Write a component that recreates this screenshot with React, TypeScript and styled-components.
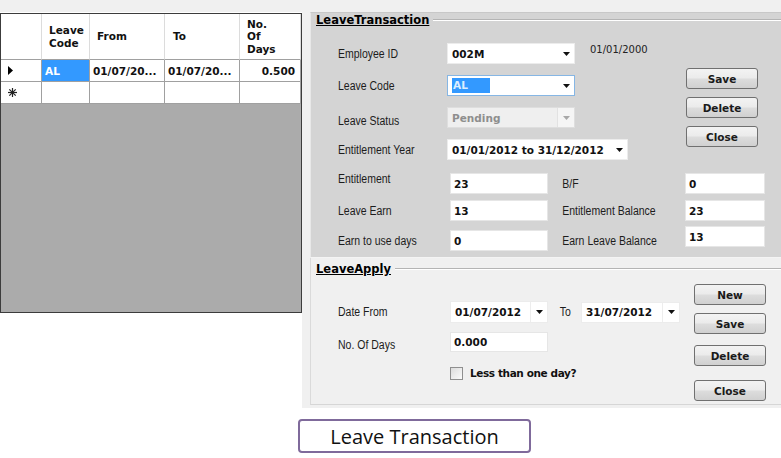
import React from "react";
import styled, { createGlobalStyle } from "styled-components";

const LABEL_FONT = `"Liberation Sans", Arial, sans-serif`;
const VALUE_FONT = `"DejaVu Sans", Verdana, sans-serif`;

const GlobalStyle = createGlobalStyle`
  html, body {
    margin: 0;
    padding: 0;
    background: #ffffff;
  }
  body {
    font-family: "Liberation Sans", Arial, sans-serif;
  }
  * {
    box-sizing: border-box;
  }
`

const Window = styled.div`
  width: 781px;
  height: 458px;
  display: flex;
  flex-direction: column;
  background: #ffffff;
  overflow: hidden;
`
const TopStrip = styled.div`
  height: 12px;
  flex-shrink: 0;
  background: #f0f0f0;
`
const Main = styled.div`
  display: flex;
  height: 396px;
  flex-shrink: 0;
`
const GridSide = styled.div`
  width: 302px;
  padding-top: 1px;
  background: #ffffff;
`
const DataGrid = styled.div`
  width: 302px;
  height: 300px;
  border: 1px solid #3c3c3c;
  background: #ababab;
`
const GridTable = styled.div`
  display: grid;
  grid-template-columns: 41px 48px 75px 75px 61px;
  grid-template-rows: 46px 22px 22px;
  background: #ffffff;
`
const HeadCell = styled.div<{ $pad?: number }>`
  display: flex;
  align-items: center;
  padding-left: ${p => p.$pad ?? 7}px;
  border-right: 1px solid #dcdcdc;
  border-bottom: 1px solid #a0a0a0;
  font: bold 10.5px/12.5px ${VALUE_FONT};
  color: #111;
`
const RowHead = styled.div`
  display: flex;
  align-items: center;
  padding-left: 7px;
  border-right: 1px solid #a0a0a0;
  border-bottom: 1px solid #a0a0a0;
`
const Cell = styled.div<{ $right?: boolean; $selected?: boolean }>`
  display: flex;
  align-items: center;
  justify-content: ${p => (p.$right ? "flex-end" : "flex-start")};
  padding: ${p => (p.$right ? "0 5px 0 0" : "0 0 0 3px")};
  border-right: 1px solid #a0a0a0;
  border-bottom: 1px solid #a0a0a0;
  background: ${p => (p.$selected ? "#3399ff" : "#ffffff")};
  color: ${p => (p.$selected ? "#ffffff" : "#111")};
  font: bold 10.5px ${VALUE_FONT};
  white-space: nowrap;
`

const RightSide = styled.div`
  flex: 1;
  background: #f0f0f0;
  padding-left: 8px;
  display: flex;
  flex-direction: column;
`
const Group = styled.section<{ $dark?: boolean; $height: number; $top?: number }>`
  height: ${p => p.$height}px;
  padding-top: ${p => p.$top ?? 0}px;
  background: ${p => (p.$dark ? "#d4d4d4" : "#f0f0f0")};
  border-left: 1px solid ${p => (p.$dark ? "#e8e8e8" : "#dadada")};
  border-bottom: 1px solid ${p => (p.$dark ? "#f4f4f4" : "#d6d6d6")};
  border-top: ${p => (p.$dark ? "1px solid #c8c8c8" : "none")};
  display: flex;
  flex-direction: column;
`
const GroupHeader = styled.div`
  height: 14px;
  display: flex;
  align-items: center;
  padding-left: 5px;
`
const GroupTitle = styled.span`
  font: bold 11.5px ${VALUE_FONT};
  text-decoration: underline;
  color: #000;
`
const GroupRule = styled.div`
  flex: 1;
  height: 2px;
  margin-left: 4px;
  border-top: 1px solid #b4b4b4;
  border-bottom: 1px solid #ffffff;
`
const GroupBody = styled.div<{ $top: number }>`
  padding: ${p => p.$top}px 0 0 27px;
  display: flex;
  flex-direction: column;
`
const Split = styled.div`
  display: flex;
`
const Fields = styled.div<{ $w: number; $top?: number; $gap?: number }>`
  width: ${p => p.$w}px;
  padding-top: ${p => p.$top ?? 0}px;
  display: flex;
  flex-direction: column;
  gap: ${p => p.$gap ?? 0}px;
`
const Row = styled.div<{ $h?: number; $mt?: number; $indent?: number }>`
  height: ${p => p.$h ?? 21}px;
  margin-top: ${p => p.$mt ?? 0}px;
  padding-left: ${p => p.$indent ?? 0}px;
  display: flex;
  align-items: center;
`
/* the form labels use a narrow face; scaled so the column widths stay as laid out */
const Label = styled.span<{ $w?: number; $indent?: number; $lift?: number }>`
  width: ${p => (p.$w ? `${p.$w}px` : "auto")};
  flex-shrink: 0;
  padding-left: ${p => p.$indent ?? 0}px;
  font: 12.5px ${LABEL_FONT};
  color: #1c1c1c;
  white-space: nowrap;
  transform: translateY(${p => -(p.$lift ?? 0)}px) scaleX(0.84);
  transform-origin: left center;
`
const Note = styled.span`
  margin-left: 15px;
  margin-top: -8px;
  font: 10px ${VALUE_FONT};
  color: #222;
`
const ComboBox = styled.div<{ $w: number; $h?: number; $disabled?: boolean; $focused?: boolean }>`
  width: ${p => p.$w}px;
  height: ${p => p.$h ?? 21}px;
  display: flex;
  align-items: center;
  padding-left: 4px;
  background: ${p => (p.$disabled ? "#efefef" : "#ffffff")};
  border: 1px solid ${p => (p.$focused ? "#86b6e4" : p.$disabled ? "#dedede" : "#ececec")};
  font: bold 10.5px ${VALUE_FONT};
  color: ${p => (p.$disabled ? "#8e8e8e" : "#111")};
`
const ComboText = styled.span`
  flex: 1;
  white-space: nowrap;
  overflow: hidden;
`
const Highlight = styled.span`
  display: inline-block;
  width: 38px;
  padding-left: 1px;
  background: #3399ff;
  color: #dbeeff;
  line-height: 15px;
`
const ArrowBox = styled.span<{ $split?: boolean; $disabled?: boolean }>`
  width: 17px;
  height: 100%;
  display: flex;
  align-items: center;
  justify-content: center;
  background: ${p => (p.$disabled ? "#f5f5f5" : "transparent")};
  border-left: 1px solid ${p => (p.$split ? "#ededed" : p.$disabled ? "#e2e2e2" : "transparent")};
`
const TextBox = styled.div<{ $w: number; $h?: number; $lift?: number }>`
  width: ${p => p.$w}px;
  height: ${p => p.$h ?? 21}px;
  display: flex;
  align-items: center;
  padding-left: 3px;
  background: #ffffff;
  border: 1px solid #e6e6e6;
  font: bold 10.5px ${VALUE_FONT};
  color: #111;
  transform: translateY(${p => -(p.$lift ?? 0)}px);
`
const DetailGrid = styled.div`
  margin-top: 13px;
  display: grid;
  grid-template-columns: 112px 98px 137px 80px;
  grid-auto-rows: 21px;
  row-gap: 6px;
  align-items: center;
`
const ButtonColumn = styled.div<{ $top: number }>`
  padding-top: ${p => p.$top}px;
  display: flex;
  flex-direction: column;
`
const Button = styled.button<{ $mt?: number }>`
  width: 72px;
  height: 21px;
  margin-top: ${p => p.$mt ?? 0}px;
  padding: 0;
  border: 1px solid #707070;
  border-radius: 3px;
  background: linear-gradient(#f3f3f3 0%, #ebebeb 48%, #dddddd 52%, #d0d0d0 100%);
  font: bold 10.5px ${VALUE_FONT};
  color: #1a1a1a;
`
const CheckBox = styled.span`
  width: 13px;
  height: 13px;
  border: 1px solid #8f8f8f;
  background: linear-gradient(135deg, #dcdcdc, #fbfbfb);
`
const CheckLabel = styled.span`
  margin-left: 7px;
  font: bold 10.5px ${VALUE_FONT};
  letter-spacing: -0.4px;
  color: #111;
`

const Footer = styled.footer`
  flex: 1;
  background: #ffffff;
  padding: 11px 0 0 298px;
`
const Caption = styled.div`
  width: 233px;
  height: 34px;
  border: 2px solid #7f6a9b;
  border-radius: 4px;
  display: flex;
  align-items: center;
  justify-content: center;
  font: 20px "Open Sans", "Liberation Sans", sans-serif;
  color: #111;
`

function DropArrow({ disabled }: { disabled?: boolean }) {
  return (
    <svg width="7" height="4" viewBox="0 0 7 4">
      <polygon points="0,0 7,0 3.5,4" fill={disabled ? "#a8a8a8" : "#111"} />
    </svg>
  );
}

function Combo({
  width,
  children,
  disabled,
  focused,
  split,
  height,
}: {
  width: number;
  children: React.ReactNode;
  disabled?: boolean;
  focused?: boolean;
  split?: boolean;
  height?: number;
}) {
  return (
    <ComboBox $w={width} $h={height} $disabled={disabled} $focused={focused}>
      <ComboText>{children}</ComboText>
      <ArrowBox $split={split} $disabled={disabled}>
        <DropArrow disabled={disabled} />
      </ArrowBox>
    </ComboBox>
  );
}

const CurrentRowMark = () => (
  <svg width="6" height="9" viewBox="0 0 6 9">
    <polygon points="0,0 5,4.5 0,9" fill="#000" />
  </svg>
);

const NewRowMark = () => (
  <svg width="9" height="9" viewBox="0 0 9 9">
    <g stroke="#222" strokeWidth="1.2">
      <line x1="4.5" y1="0" x2="4.5" y2="9" />
      <line x1="0" y1="4.5" x2="9" y2="4.5" />
      <line x1="1.3" y1="1.3" x2="7.7" y2="7.7" />
      <line x1="7.7" y1="1.3" x2="1.3" y2="7.7" />
    </g>
  </svg>
);

export default function App() {
  return (
    <Window>
      <GlobalStyle />
      <TopStrip />
      <Main>
        <GridSide>
          <DataGrid>
            <GridTable>
              <HeadCell />
              <HeadCell>Leave<br />Code</HeadCell>
              <HeadCell>From</HeadCell>
              <HeadCell $pad={8}>To</HeadCell>
              <HeadCell>No.<br />Of<br />Days</HeadCell>

              <RowHead><CurrentRowMark /></RowHead>
              <Cell $selected>AL</Cell>
              <Cell>01/07/20...</Cell>
              <Cell>01/07/20...</Cell>
              <Cell $right>0.500</Cell>

              <RowHead><NewRowMark /></RowHead>
              <Cell />
              <Cell />
              <Cell />
              <Cell />
            </GridTable>
          </DataGrid>
        </GridSide>

        <RightSide>
          <Group $dark $height={246}>
            <GroupHeader>
              <GroupTitle>LeaveTransaction</GroupTitle>
              <GroupRule />
            </GroupHeader>
            <GroupBody $top={16}>
              <Split>
                <Fields $w={348} $gap={11}>
                  <Row>
                    <Label $w={109}>Employee ID</Label>
                    <Combo width={128}>002M</Combo>
                    <Note>01/01/2000</Note>
                  </Row>
                  <Row>
                    <Label $w={109}>Leave Code</Label>
                    <Combo width={128} focused>
                      <Highlight>AL</Highlight>
                    </Combo>
                  </Row>
                  <Row>
                    <Label $w={109} $lift={-3}>Leave Status</Label>
                    <Combo width={128} disabled>Pending</Combo>
                  </Row>
                  <Row>
                    <Label $w={109}>Entitlement Year</Label>
                    <Combo width={181}>01/01/2012 to 31/12/2012</Combo>
                  </Row>
                </Fields>
                <ButtonColumn $top={25}>
                  <Button>Save</Button>
                  <Button $mt={8}>Delete</Button>
                  <Button $mt={8}>Close</Button>
                </ButtonColumn>
              </Split>
              <DetailGrid>
                <Label $lift={5}>Entitlement</Label>
                <TextBox $w={98}>23</TextBox>
                <Label $indent={17}>B/F</Label>
                <TextBox $w={80}>0</TextBox>

                <Label>Leave Earn</Label>
                <TextBox $w={98}>13</TextBox>
                <Label $indent={17}>Entitlement Balance</Label>
                <TextBox $w={80}>23</TextBox>

                <Label $lift={-3}>Earn to use days</Label>
                <TextBox $w={98} $lift={-3}>0</TextBox>
                <Label $indent={17} $lift={-3}>Earn Leave Balance</Label>
                <TextBox $w={80} $lift={1}>13</TextBox>
              </DetailGrid>
            </GroupBody>
          </Group>

          <Group $height={147} $top={4}>
            <GroupHeader>
              <GroupTitle>LeaveApply</GroupTitle>
              <GroupRule />
            </GroupHeader>
            <GroupBody $top={0}>
              <Split>
                <Fields $w={356} $top={25}>
                  <Row $h={22}>
                    <Label $w={112}>Date From</Label>
                    <Combo width={98} height={22} split>01/07/2012</Combo>
                    <Label $w={33} $indent={14}>To</Label>
                    <Combo width={99} split>31/07/2012</Combo>
                  </Row>
                  <Row $h={20} $mt={9}>
                    <Label $w={112} $lift={-3}>No. Of Days</Label>
                    <TextBox $w={98} $h={20}>0.000</TextBox>
                  </Row>
                  <Row $h={20} $mt={11} $indent={112}>
                    <CheckBox />
                    <CheckLabel>Less than one day?</CheckLabel>
                  </Row>
                </Fields>
                <ButtonColumn $top={8}>
                  <Button>New</Button>
                  <Button $mt={8}>Save</Button>
                  <Button $mt={11}>Delete</Button>
                  <Button $mt={14}>Close</Button>
                </ButtonColumn>
              </Split>
            </GroupBody>
          </Group>
        </RightSide>
      </Main>

      <Footer>
        <Caption>Leave Transaction</Caption>
      </Footer>
    </Window>
  );
}
